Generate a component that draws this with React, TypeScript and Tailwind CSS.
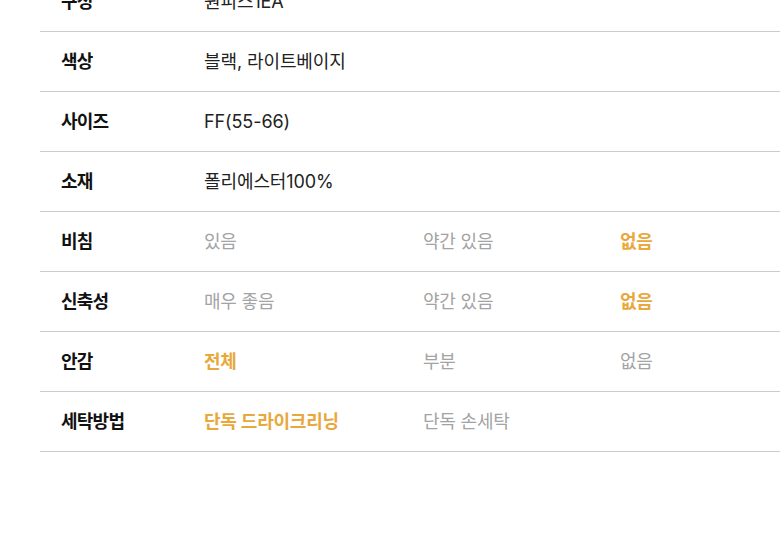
const FONT = "font-['Inter','Noto_Sans_CJK_KR',sans-serif]";

type Opt = { text: string; on?: boolean };

const plainRows: { label: string; value: string }[] = [
  { label: '구성', value: '원피스1EA' },
  { label: '색상', value: '블랙, 라이트베이지' },
  { label: '사이즈', value: 'FF(55-66)' },
  { label: '소재', value: '폴리에스터100%' },
];

const optionRows: { label: string; options: Opt[] }[] = [
  { label: '비침', options: [{ text: '있음' }, { text: '약간 있음' }, { text: '없음', on: true }] },
  { label: '신축성', options: [{ text: '매우 좋음' }, { text: '약간 있음' }, { text: '없음', on: true }] },
  { label: '안감', options: [{ text: '전체', on: true }, { text: '부분' }, { text: '없음' }] },
  { label: '세탁방법', options: [{ text: '단독 드라이크리닝', on: true }, { text: '단독 손세탁' }] },
];

const optWidths = ['w-[219px]', 'w-[197px]', 'w-[160px]'];

export default function App() {
  return (
    <div className={`h-[560px] w-[780px] overflow-hidden bg-white ${FONT}`}>
      <div className="-mt-[28px] ml-10 w-[740px]">
        {plainRows.map((r) => (
          <div key={r.label} className="flex h-[60px] items-center border-b border-[#cccccc]">
            <div className="w-[164px] pl-[21px] text-[18px] font-bold tracking-[-0.75px] text-[#111]">{r.label}</div>
            <div className="text-[18px] tracking-[-0.1px] text-[#222]">{r.value}</div>
          </div>
        ))}
        {optionRows.map((r) => (
          <div key={r.label} className="flex h-[60px] items-center border-b border-[#cccccc]">
            <div className="w-[164px] pl-[21px] text-[18px] font-bold tracking-[-0.75px] text-[#111]">{r.label}</div>
            {r.options.map((o, i) => (
              <div
                key={o.text + i}
                className={`${optWidths[i]} text-[18px] tracking-[-0.2px] ${
                  o.on ? 'font-bold text-[#e8a83c]' : 'text-[#a3a3a3]'
                }`}
              >
                {o.text}
              </div>
            ))}
          </div>
        ))}
      </div>
    </div>
  );
}
